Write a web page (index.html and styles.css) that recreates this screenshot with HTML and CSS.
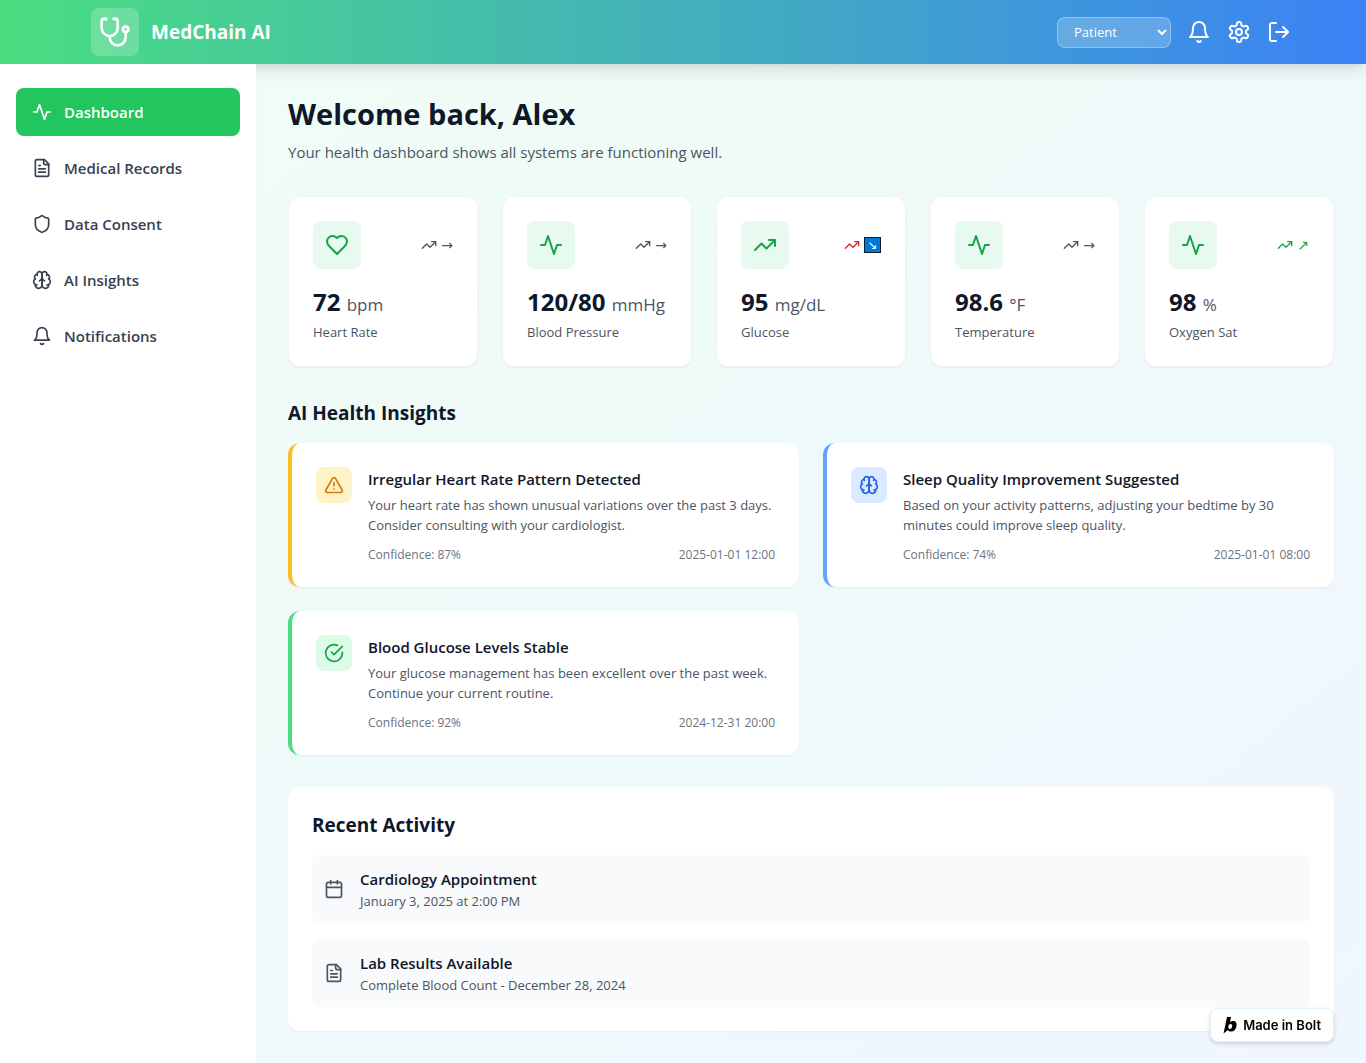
FILE: index.html
```html
<!DOCTYPE html>
<html lang="en">
<head>
    <meta charset="UTF-8">
    <meta name="viewport" content="width=device-width, initial-scale=1.0">
    <title>MedChain AI</title>
    <link rel="stylesheet" href="styles.css">
</head>
<body>
    <!-- Icon set -->
    <svg class="sprite" aria-hidden="true">
        <symbol id="stethoscope" viewBox="0 0 24 24">
            <path d="M4.8 2.3A.3.3 0 1 0 5 2H4a2 2 0 0 0-2 2v5a6 6 0 0 0 6 6a6 6 0 0 0 6-6V4a2 2 0 0 0-2-2h-1a.2.2 0 1 0 .3.3"/>
            <path d="M8 15v1a6 6 0 0 0 6 6a6 6 0 0 0 6-6v-4"/>
            <circle cx="20" cy="10" r="2"/>
        </symbol>
        <symbol id="bell" viewBox="0 0 24 24">
            <path d="M6 8a6 6 0 0 1 12 0c0 7 3 9 3 9H3s3-2 3-9"/>
            <path d="M10.3 21a1.94 1.94 0 0 0 3.4 0"/>
        </symbol>
        <symbol id="settings" viewBox="0 0 24 24">
            <path d="M12.22 2h-.44a2 2 0 0 0-2 2v.18a2 2 0 0 1-1 1.73l-.43.25a2 2 0 0 1-2 0l-.15-.08a2 2 0 0 0-2.73.73l-.22.38a2 2 0 0 0 .73 2.73l.15.1a2 2 0 0 1 1 1.72v.51a2 2 0 0 1-1 1.74l-.15.09a2 2 0 0 0-.73 2.73l.22.38a2 2 0 0 0 2.73.73l.15-.08a2 2 0 0 1 2 0l.43.25a2 2 0 0 1 1 1.73V20a2 2 0 0 0 2 2h.44a2 2 0 0 0 2-2v-.18a2 2 0 0 1 1-1.73l.43-.25a2 2 0 0 1 2 0l.15.08a2 2 0 0 0 2.73-.73l.22-.39a2 2 0 0 0-.73-2.73l-.15-.08a2 2 0 0 1-1-1.74v-.5a2 2 0 0 1 1-1.74l.15-.09a2 2 0 0 0 .73-2.73l-.22-.38a2 2 0 0 0-2.73-.73l-.15.08a2 2 0 0 1-2 0l-.43-.25a2 2 0 0 1-1-1.73V4a2 2 0 0 0-2-2z"/>
            <circle cx="12" cy="12" r="3"/>
        </symbol>
        <symbol id="logout" viewBox="0 0 24 24">
            <path d="M9 21H5a2 2 0 0 1-2-2V5a2 2 0 0 1 2-2h4"/>
            <path d="m16 17 5-5-5-5"/>
            <path d="M21 12H9"/>
        </symbol>
        <symbol id="activity" viewBox="0 0 24 24">
            <path d="M22 12h-4l-3 9L9 3l-3 9H2"/>
        </symbol>
        <symbol id="file-text" viewBox="0 0 24 24">
            <path d="M15 2H6a2 2 0 0 0-2 2v16a2 2 0 0 0 2 2h12a2 2 0 0 0 2-2V7Z"/>
            <path d="M14 2v4a2 2 0 0 0 2 2h4"/>
            <path d="M10 9H8M16 13H8M16 17H8"/>
        </symbol>
        <symbol id="shield" viewBox="0 0 24 24">
            <path d="M20 13c0 5-3.5 7.5-7.66 8.95a1 1 0 0 1-.67-.01C7.5 20.5 4 18 4 13V6a1 1 0 0 1 1-1c2 0 4.5-1.2 6.24-2.72a1.17 1.17 0 0 1 1.52 0C14.51 3.81 17 5 19 5a1 1 0 0 1 1 1z"/>
        </symbol>
        <symbol id="brain" viewBox="0 0 24 24">
            <path d="M12 5a3 3 0 1 0-5.997.125 4 4 0 0 0-2.526 5.77 4 4 0 0 0 .556 6.588A4 4 0 1 0 12 18Z"/>
            <path d="M12 5a3 3 0 1 1 5.997.125 4 4 0 0 1 2.526 5.77 4 4 0 0 1-.556 6.588A4 4 0 1 1 12 18Z"/>
            <path d="M15 13a4.5 4.5 0 0 1-3-4 4.5 4.5 0 0 1-3 4"/>
            <path d="M17.599 6.5a3 3 0 0 0 .399-1.375M6.003 5.125A3 3 0 0 0 6.401 6.5M3.477 10.896a4 4 0 0 1 .585-.396M19.938 10.5a4 4 0 0 1 .585.396M6 18a4 4 0 0 1-1.967-.516M19.967 17.484A4 4 0 0 1 18 18"/>
        </symbol>
        <symbol id="heart" viewBox="0 0 24 24">
            <path d="M19 14c1.49-1.46 3-3.21 3-5.5A5.5 5.5 0 0 0 16.5 3c-1.76 0-3 .5-4.5 2-1.5-1.5-2.74-2-4.5-2A5.5 5.5 0 0 0 2 8.5c0 2.3 1.5 4.05 3 5.5l7 7Z"/>
        </symbol>
        <symbol id="trending-up" viewBox="0 0 24 24">
            <path d="M22 7l-8.5 8.5-5-5L2 17"/>
            <path d="M16 7h6v6"/>
        </symbol>
        <symbol id="alert" viewBox="0 0 24 24">
            <path d="m21.73 18-8-14a2 2 0 0 0-3.48 0l-8 14A2 2 0 0 0 4 21h16a2 2 0 0 0 1.73-3Z"/>
            <path d="M12 9v4M12 17h.01"/>
        </symbol>
        <symbol id="check" viewBox="0 0 24 24">
            <path d="M22 11.08V12a10 10 0 1 1-5.93-9.14"/>
            <path d="m9 11 3 3L22 4"/>
        </symbol>
        <symbol id="calendar" viewBox="0 0 24 24">
            <path d="M8 2v4M16 2v4M3 10h18"/>
            <rect x="3" y="4" width="18" height="18" rx="2"/>
        </symbol>
    </svg>

    <header class="header">
        <div class="header-inner">
            <div class="brand">
                <span class="brand-logo"><svg class="icon icon-lg"><use href="#stethoscope"/></svg></span>
                <span class="brand-name">MedChain AI</span>
            </div>
            <div class="header-actions">
                <select class="role-select" aria-label="Role">
                    <option>Patient</option>
                    <option>Doctor</option>
                    <option>Admin</option>
                </select>
                <button class="icon-button" aria-label="Notifications"><svg class="icon icon-md"><use href="#bell"/></svg></button>
                <button class="icon-button" aria-label="Settings"><svg class="icon icon-md"><use href="#settings"/></svg></button>
                <button class="icon-button" aria-label="Log out"><svg class="icon icon-md"><use href="#logout"/></svg></button>
            </div>
        </div>
    </header>

    <div class="layout">
        <nav class="sidebar">
            <button class="nav-item active"><svg class="icon"><use href="#activity"/></svg>Dashboard</button>
            <button class="nav-item"><svg class="icon"><use href="#file-text"/></svg>Medical Records</button>
            <button class="nav-item"><svg class="icon"><use href="#shield"/></svg>Data Consent</button>
            <button class="nav-item"><svg class="icon"><use href="#brain"/></svg>AI Insights</button>
            <button class="nav-item"><svg class="icon"><use href="#bell"/></svg>Notifications</button>
        </nav>

        <main class="main">
            <section class="welcome">
                <h1>Welcome back, Alex</h1>
                <p>Your health dashboard shows all systems are functioning well.</p>
            </section>

            <section class="metrics">
                <div class="metric-card">
                    <div class="metric-top">
                        <span class="metric-icon"><svg class="icon icon-md"><use href="#heart"/></svg></span>
                        <span class="trend"><svg class="icon icon-sm"><use href="#trending-up"/></svg><span>→</span></span>
                    </div>
                    <div class="metric-value">72 <span class="unit">bpm</span></div>
                    <div class="metric-label">Heart Rate</div>
                </div>
                <div class="metric-card">
                    <div class="metric-top">
                        <span class="metric-icon"><svg class="icon icon-md"><use href="#activity"/></svg></span>
                        <span class="trend"><svg class="icon icon-sm"><use href="#trending-up"/></svg><span>→</span></span>
                    </div>
                    <div class="metric-value">120/80 <span class="unit">mmHg</span></div>
                    <div class="metric-label">Blood Pressure</div>
                </div>
                <div class="metric-card">
                    <div class="metric-top">
                        <span class="metric-icon"><svg class="icon icon-md"><use href="#trending-up"/></svg></span>
                        <span class="trend down"><svg class="icon icon-sm"><use href="#trending-up"/></svg><span class="arrow-box">↘</span></span>
                    </div>
                    <div class="metric-value">95 <span class="unit">mg/dL</span></div>
                    <div class="metric-label">Glucose</div>
                </div>
                <div class="metric-card">
                    <div class="metric-top">
                        <span class="metric-icon"><svg class="icon icon-md"><use href="#activity"/></svg></span>
                        <span class="trend"><svg class="icon icon-sm"><use href="#trending-up"/></svg><span>→</span></span>
                    </div>
                    <div class="metric-value">98.6 <span class="unit">°F</span></div>
                    <div class="metric-label">Temperature</div>
                </div>
                <div class="metric-card">
                    <div class="metric-top">
                        <span class="metric-icon"><svg class="icon icon-md"><use href="#activity"/></svg></span>
                        <span class="trend up"><svg class="icon icon-sm"><use href="#trending-up"/></svg><span>↗</span></span>
                    </div>
                    <div class="metric-value">98 <span class="unit">%</span></div>
                    <div class="metric-label">Oxygen Sat</div>
                </div>
            </section>

            <section class="insights">
                <h2>AI Health Insights</h2>
                <div class="insight-grid">
                    <article class="insight-card warning">
                        <span class="insight-icon"><svg class="icon"><use href="#alert"/></svg></span>
                        <div class="insight-body">
                            <h3>Irregular Heart Rate Pattern Detected</h3>
                            <p>Your heart rate has shown unusual variations over the past 3 days. Consider consulting with your cardiologist.</p>
                            <div class="insight-meta"><span>Confidence: 87%</span><span>2025-01-01 12:00</span></div>
                        </div>
                    </article>
                    <article class="insight-card info">
                        <span class="insight-icon"><svg class="icon"><use href="#brain"/></svg></span>
                        <div class="insight-body">
                            <h3>Sleep Quality Improvement Suggested</h3>
                            <p>Based on your activity patterns, adjusting your bedtime by 30 minutes could improve sleep quality.</p>
                            <div class="insight-meta"><span>Confidence: 74%</span><span>2025-01-01 08:00</span></div>
                        </div>
                    </article>
                    <article class="insight-card success">
                        <span class="insight-icon"><svg class="icon"><use href="#check"/></svg></span>
                        <div class="insight-body">
                            <h3>Blood Glucose Levels Stable</h3>
                            <p>Your glucose management has been excellent over the past week. Continue your current routine.</p>
                            <div class="insight-meta"><span>Confidence: 92%</span><span>2024-12-31 20:00</span></div>
                        </div>
                    </article>
                </div>
            </section>

            <section class="activity-panel">
                <h2>Recent Activity</h2>
                <div class="activity-list">
                    <div class="activity-item">
                        <svg class="icon"><use href="#calendar"/></svg>
                        <div>
                            <h3>Cardiology Appointment</h3>
                            <p>January 3, 2025 at 2:00 PM</p>
                        </div>
                    </div>
                    <div class="activity-item">
                        <svg class="icon"><use href="#file-text"/></svg>
                        <div>
                            <h3>Lab Results Available</h3>
                            <p>Complete Blood Count - December 28, 2024</p>
                        </div>
                    </div>
                </div>
            </section>
        </main>
    </div>

    <a class="bolt-badge" href="#">
        <svg class="bolt-logo" viewBox="0 0 14 18"><path fill-rule="evenodd" d="M4 1h4L7 6c1-1 2-1 3-1 3 0 4 2 3.500 5C13 13.500 11 15.500 8 15.500c-1.500 0-2.500-.5-3-1.500L.500 17.500ZM7.500 8C6.300 8 5.500 9 5.300 10.500S5.700 13 6.900 13s2-1 2.300-2.500S8.800 8 7.500 8Z"/></svg>
        Made in Bolt
    </a>
</body>
</html>
```

FILE: styles.css
```css
* {
    box-sizing: border-box;
}

body {
    margin: 0;
    min-height: 100vh;
    display: flex;
    flex-direction: column;
    font-family: 'Open Sans', 'Noto Sans', sans-serif;
    font-size: 15px;
    line-height: 24px;
    color: #0f172a;
    background: linear-gradient(to bottom right, #f0fdf4, #eff6ff);
}

h1, h2, h3, p {
    margin: 0;
}

button, select {
    font-family: inherit;
}

.sprite {
    display: none;
}

/* Icons */
.icon {
    width: 20px;
    height: 20px;
    flex-shrink: 0;
    fill: none;
    stroke: currentColor;
    stroke-width: 2;
    stroke-linecap: round;
    stroke-linejoin: round;
}

.icon-sm {
    width: 16px;
    height: 16px;
}

.icon-md {
    width: 24px;
    height: 24px;
}

.icon-lg {
    width: 32px;
    height: 32px;
}

/* Header */
.header {
    background: linear-gradient(to right, #4ade80, #3b82f6);
    box-shadow: 0 10px 15px -3px rgba(0, 0, 0, 0.1), 0 4px 6px -4px rgba(0, 0, 0, 0.1);
    color: #fff;
}

.header-inner {
    max-width: 1280px;
    height: 64px;
    margin: 0 auto;
    padding: 0 32px 0 48px;
    display: flex;
    align-items: center;
    justify-content: space-between;
}

.brand {
    display: flex;
    align-items: center;
    gap: 12px;
}

.brand-logo {
    display: flex;
    padding: 8px;
    border-radius: 8px;
    background-color: rgba(255, 255, 255, 0.2);
}

.brand-name {
    font-size: 19px;
    font-weight: bold;
}

.header-actions {
    display: flex;
    align-items: center;
    gap: 16px;
}

.role-select {
    width: 114px;
    height: 31px;
    padding: 0 0 0 12px;
    border: 1px solid rgba(255, 255, 255, 0.3);
    border-radius: 8px;
    background-color: rgba(255, 255, 255, 0.2);
    color: #fff;
    font-size: 13px;
}

.role-select option {
    color: #0f172a;
}

.icon-button {
    display: flex;
    padding: 0;
    border: none;
    background: none;
    color: #fff;
    cursor: pointer;
}

/* Layout */
.layout {
    flex: 1;
    display: flex;
}

.sidebar {
    position: relative;
    width: 256px;
    flex-shrink: 0;
    padding: 24px 16px;
    display: flex;
    flex-direction: column;
    gap: 8px;
    background-color: #fff;
    box-shadow: 0 1px 2px rgba(0, 0, 0, 0.05);
}

.nav-item {
    display: flex;
    align-items: center;
    gap: 12px;
    padding: 12px 16px;
    border: none;
    border-radius: 8px;
    background: none;
    color: #374151;
    font-size: 15px;
    font-weight: 600;
    line-height: 24px;
    text-align: left;
    cursor: pointer;
}

.nav-item:hover {
    background-color: #f9fafb;
}

.nav-item.active {
    background-color: #22c55e;
    color: #fff;
}

.main {
    flex: 1;
    min-width: 0;
    padding: 32px;
    display: flex;
    flex-direction: column;
    gap: 32px;
}

.welcome h1 {
    font-size: 29px;
    line-height: 36px;
    margin-bottom: 8px;
}

.welcome p {
    color: #4b5563;
}

.main h2 {
    font-size: 19px;
    line-height: 28px;
    margin-bottom: 16px;
}

.main h3 {
    font-size: 15px;
    line-height: 24px;
    font-weight: 600;
}

/* Metric cards */
.metrics {
    display: grid;
    grid-template-columns: repeat(5, 1fr);
    gap: 24px;
}

.metric-card {
    padding: 24px;
    border: 1px solid #f3f4f6;
    border-radius: 12px;
    background-color: #fff;
    box-shadow: 0 1px 2px rgba(0, 0, 0, 0.05);
}

.metric-top {
    display: flex;
    align-items: center;
    justify-content: space-between;
    margin-bottom: 16px;
}

.metric-icon {
    display: flex;
    padding: 12px;
    border-radius: 8px;
    background-color: #e8f9ef;
    color: #16a34a;
}

.trend {
    display: flex;
    align-items: center;
    gap: 4px;
    color: #4b5563;
    font-family: 'DejaVu Sans', sans-serif;
    font-size: 14px;
    line-height: 20px;
}

.trend.up {
    color: #16a34a;
}

.trend.down {
    color: #dc2626;
}

.arrow-box {
    width: 17px;
    height: 16px;
    border: 1px solid #111827;
    background-color: #0078d7;
    color: #fff;
    font-size: 12px;
    line-height: 14px;
    text-align: center;
}

.metric-value {
    margin-bottom: 3px;
    font-size: 24px;
    font-weight: bold;
    line-height: 34px;
    white-space: nowrap;
}

.unit {
    color: #4b5563;
    font-size: 17px;
    font-weight: normal;
    line-height: 20px;
}

.metric-label {
    color: #4b5563;
    font-size: 13px;
    line-height: 20px;
}

/* Insights */
.insight-grid {
    display: grid;
    grid-template-columns: repeat(2, 1fr);
    gap: 24px;
}

.insight-card {
    display: flex;
    align-items: flex-start;
    gap: 16px;
    padding: 24px;
    border-left: 4px solid;
    border-radius: 12px;
    background-color: #fff;
    box-shadow: 0 1px 2px rgba(0, 0, 0, 0.05);
}

.insight-card.warning {
    border-color: #fbbf24;
}

.insight-card.info {
    border-color: #60a5fa;
}

.insight-card.success {
    border-color: #4ade80;
}

.insight-icon {
    display: flex;
    padding: 8px;
    border-radius: 8px;
}

.warning .insight-icon {
    background-color: #fef3c7;
    color: #d97706;
}

.info .insight-icon {
    background-color: #dbeafe;
    color: #2563eb;
}

.success .insight-icon {
    background-color: #dcfce7;
    color: #16a34a;
}

.insight-body {
    flex: 1;
}

.insight-body p {
    margin: 4px 0 12px;
    color: #4b5563;
    font-size: 13px;
    line-height: 20px;
}

.insight-meta {
    display: flex;
    justify-content: space-between;
    color: #6b7280;
    font-size: 12px;
    line-height: 16px;
}

/* Recent activity */
.activity-panel {
    padding: 24px;
    border-radius: 12px;
    background-color: #fff;
    box-shadow: 0 1px 2px rgba(0, 0, 0, 0.05);
}

.activity-list {
    display: flex;
    flex-direction: column;
    gap: 16px;
}

.activity-item {
    display: flex;
    align-items: center;
    gap: 16px;
    padding: 12px;
    border-radius: 8px;
    background-color: #f9fafb;
}

.activity-item .icon {
    color: #4b5563;
}

.activity-item p {
    color: #4b5563;
    font-size: 13px;
    line-height: 20px;
}

/* Floating badge */
.bolt-badge {
    position: fixed;
    right: 32px;
    bottom: 21px;
    display: flex;
    align-items: center;
    gap: 6px;
    padding: 4px 12px;
    border: 1px solid #e0f2fe;
    border-radius: 8px;
    background-color: #fff;
    box-shadow: 0 2px 4px rgba(0, 0, 0, 0.15);
    color: #000;
    font-family: Inter, sans-serif;
    font-size: 13px;
    font-weight: 600;
    text-decoration: none;
}

.bolt-logo {
    width: 14px;
    height: 18px;
}
```
